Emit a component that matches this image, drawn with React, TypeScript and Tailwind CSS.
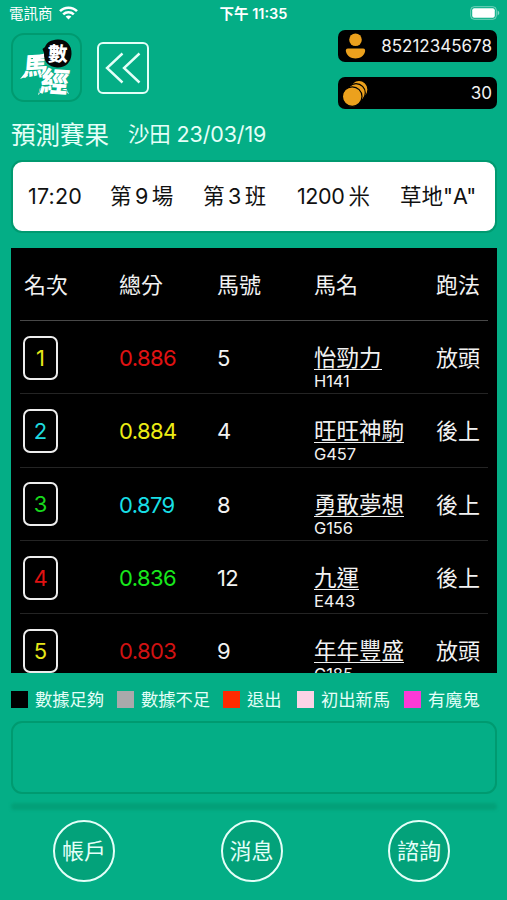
import React from "react";

type Runner = {
  rank: number;
  rankColor: string;
  score: string;
  scoreColor: string;
  no: number;
  name: string;
  code: string;
  style: string;
};

const runners: Runner[] = [
  { rank: 1, rankColor: "text-[#e6e619]", score: "0.886", scoreColor: "text-[#e01212]", no: 5, name: "怡勁力", code: "H141", style: "放頭" },
  { rank: 2, rankColor: "text-[#1fd9de]", score: "0.884", scoreColor: "text-[#ecec14]", no: 4, name: "旺旺神駒", code: "G457", style: "後上" },
  { rank: 3, rankColor: "text-[#18d81c]", score: "0.879", scoreColor: "text-[#18dfe6]", no: 8, name: "勇敢夢想", code: "G156", style: "後上" },
  { rank: 4, rankColor: "text-[#e01212]", score: "0.836", scoreColor: "text-[#18e81c]", no: 12, name: "九運", code: "E443", style: "後上" },
  { rank: 5, rankColor: "text-[#e6e619]", score: "0.803", scoreColor: "text-[#d01212]", no: 9, name: "年年豐盛", code: "G185", style: "放頭" },
];

const legends = [
  { color: "bg-black", label: "數據足夠", width: "w-[106px]" },
  { color: "bg-[#a9a9ab]", label: "數據不足", width: "w-[106px]" },
  { color: "bg-[#ff2a00]", label: "退出", width: "w-[74px]" },
  { color: "bg-[#fbd3e6]", label: "初出新馬", width: "w-[107px]" },
  { color: "bg-[#fb3ad6]", label: "有魔鬼", width: "w-[80px]" },
];

const StatusBar = () => (
  <div className="relative flex h-[28px] shrink-0 items-center justify-between pl-[9px] pr-[7px] text-white">
    <div className="flex items-center gap-[6px]">
      <span className="text-[14.5px] leading-none">電訊商</span>
      <svg width="19" height="14" viewBox="0 0 19 14" fill="none" stroke="white" strokeWidth="2.6" className="-mt-[2px]">
        <path d="M1 5.2C5.6 0.6 13.4 0.6 18 5.2" />
        <path d="M4.2 8.4C7.1 5.6 11.9 5.6 14.8 8.4" />
        <path d="M9.5 13.5L6.6 10.5C8.2 9.1 10.8 9.1 12.4 10.5Z" fill="white" stroke="none" />
      </svg>
    </div>
    <span className="absolute left-0 w-full text-center text-[14.5px] font-semibold leading-none">
      下午 11:35
    </span>
    <svg width="30" height="14" viewBox="0 0 30 14" className="-mt-[2px]">
      <rect x="0.7" y="0.7" width="25.6" height="12.6" rx="3.5" fill="none" stroke="white" strokeOpacity="0.45" />
      <rect x="2.2" y="2.2" width="22.6" height="9.6" rx="2" fill="white" />
      <path d="M27.6 4.6C29.8 5.4 29.8 8.6 27.6 9.4Z" fill="white" fillOpacity="0.5" />
    </svg>
  </div>
);

const Logo = () => (
  <div className="h-[69px] w-[71px] rounded-[13px] border-2 border-[#009a70]">
    <svg width="67" height="65" viewBox="0 0 67 65" className="font-black">
      <g fill="white">
        <text fontSize="25" transform="translate(9 41) rotate(-3) skewX(-8)">馬</text>
        {/* brush tails */}
        <path d="M13 37L7 44L15 41Z" />
        <path d="M20 22L33 18L34 22L20 26Z" />
        <path d="M27 53L25 60L32 55Z" />
        <path d="M49 55L56 59L53 53Z" />
        <text fontSize="28" stroke="#04ae86" strokeWidth="1.6" paintOrder="stroke" transform="translate(26 56) rotate(4) skewX(-6)">經</text>
      </g>
      <path
        d="M44.5 4.500C53 4 59 10 58.500 19C58 28 52 33 44 32.500C36 32 30.500 27 31 18L29.500 14L32 12C34 7 38 5 44.500 4.500Z"
        fill="#060606"
      />
      <text x="35" y="26" fontSize="19.5" fill="white">數</text>
    </svg>
  </div>
);

const Header = () => (
  <div className="flex h-[81px] shrink-0 pl-[11px] pr-[10px]">
    <div className="pt-[5px]">
      <Logo />
    </div>
    <div className="ml-[15px] mt-[14px] flex h-[52px] w-[52px] items-center justify-center rounded-[6px] border-2 border-[#e4fff8]">
      <svg width="36" height="32" viewBox="0 0 36 32" fill="none" stroke="#e4fff8" strokeWidth="2.4">
        <path d="M17.500 1.500L2 16L17.500 30.500" />
        <path d="M34.500 1.500L19 16L34.500 30.500" />
      </svg>
    </div>
    <div className="ml-auto flex flex-col gap-[15px] pt-[2px]">
      <div className="flex h-[32px] w-[159px] items-center justify-between rounded-[7px] bg-black pl-[7px] pr-[5px]">
        <svg width="21" height="26" viewBox="0 0 21 26" fill="#eca11d">
          <circle cx="10.500" cy="6.700" r="6.300" />
          <path d="M3 15.600H18C20 15.600 20.500 17 20 18.800C19 23 15 25.500 10.500 25.500C6 25.500 2 23 1 18.800C0.500 17 1 15.600 3 15.600Z" />
        </svg>
        <span className="text-[17px] leading-none text-[#f2f2f2]">85212345678</span>
      </div>
      <div className="flex h-[32px] w-[159px] items-center justify-between rounded-[7px] bg-black pl-[4px] pr-[5px]">
        <svg width="27" height="27" viewBox="0 0 27 27" fill="#eca11d" stroke="black" strokeWidth="1.200">
          <circle cx="17" cy="9.500" r="9" />
          <circle cx="14" cy="13" r="9.300" />
          <circle cx="10.200" cy="16.600" r="9.800" />
        </svg>
        <span className="text-[17px] leading-none text-[#f2f2f2]">30</span>
      </div>
    </div>
  </div>
);

const RaceInfo = () => (
  <div className="ml-[11px] mr-[10px] flex h-[73px] shrink-0 items-center rounded-[11px] border-2 border-[#009a70] bg-white pl-[15px] pt-[1px] text-[21.5px] leading-none text-[#111] whitespace-nowrap">
    <span className="w-[82px] tracking-[0.2px]">17:20</span>
    <span className="w-[93px]">第<span className="mx-[3.500px]">9</span>場</span>
    <span className="w-[94px]">第<span className="mx-[3.500px]">3</span>班</span>
    <span className="w-[103px] tracking-[-0.4px]">1200<span className="ml-[4px]">米</span></span>
    <span>草地"A"</span>
  </div>
);

const ResultTable = () => (
  <div className="ml-[11px] mr-[10px] mt-[15px] h-[425px] shrink-0 overflow-hidden bg-black px-[9px] text-[22px] leading-none text-[#f2f2f2]">
    <div className="grid h-[73px] grid-cols-[95px_98px_97px_122px_1fr] items-center border-b border-[#484848] pl-[4px] pt-[1px] whitespace-nowrap">
      <span>名次</span>
      <span>總分</span>
      <span>馬號</span>
      <span>馬名</span>
      <span>跑法</span>
    </div>
    {runners.map((runner) => (
      <div
        key={runner.rank}
        className="grid h-[73.3px] grid-cols-[95px_98px_97px_122px_1fr] items-center border-b border-[#242424] pl-[4px] pt-[1px] whitespace-nowrap"
      >
        <div className={`-ml-[1px] flex h-[44px] w-[35px] items-center justify-center rounded-[7px] border-2 border-[#ededed] ${runner.rankColor}`}>
          {runner.rank}
        </div>
        <span className={`pt-[1px] tracking-[-0.600px] ${runner.scoreColor}`}>{runner.score}</span>
        <span className="pt-[1px] tracking-[-0.600px]">{runner.no}</span>
        <div className="pt-[23px]">
          <p className="h-[23px] w-fit border-b-[1.500px] border-[#f2f2f2] text-[22.5px] leading-[22px]">{runner.name}</p>
          <p className="mt-[1px] text-[16.5px] leading-[20px] tracking-[-0.1px]">{runner.code}</p>
        </div>
        <span className="pt-[1px]">{runner.style}</span>
      </div>
    ))}
  </div>
);

const Legend = () => (
  <div className="flex h-[48px] shrink-0 pl-[11px] pt-[18px]">
    {legends.map((item) => (
      <div key={item.label} className={`flex h-[17px] items-center gap-[7px] whitespace-nowrap ${item.width}`}>
        <span className={`h-[17px] w-[17px] shrink-0 ${item.color}`} />
        <span className="text-[17.3px] leading-none text-[#e4fff8]">{item.label}</span>
      </div>
    ))}
  </div>
);

const BottomNav = () => (
  <nav className="flex justify-between pl-[53px] pr-[57px] pt-[10px]">
    {["帳戶", "消息", "諮詢"].map((label) => (
      <button
        key={label}
        className="flex h-[62px] w-[62px] items-center justify-center rounded-full border-2 border-[#e4fff8] bg-[#03a27a] text-[22px] leading-none text-[#e4fff8] whitespace-nowrap"
      >
        {label}
      </button>
    ))}
  </nav>
);

const App = () => {
  return (
    <main className="flex h-[900px] w-[507px] flex-col overflow-hidden bg-[#04ae86] font-['Inter','Noto_Sans_CJK_TC',sans-serif]">
      <StatusBar />
      <Header />
      <div className="flex h-[51px] shrink-0 items-center gap-[19px] pl-[11px] pt-[1px] text-[#e4fff8] whitespace-nowrap">
        <h1 className="text-[24.5px] leading-none">預測賽果</h1>
        <span className="text-[21.5px] leading-none tracking-[-0.15px]">沙田 23/03/19</span>
      </div>
      <RaceInfo />
      <ResultTable />
      <Legend />
      <div className="ml-[11px] mr-[10px] h-[73px] shrink-0 rounded-[11px] border-2 border-[#009a70]" />
      <div className="ml-[11px] mr-[10px] mt-[9px] h-[7px] shrink-0 rounded-full bg-[#02a078] blur-[1.500px]" />
      <BottomNav />
    </main>
  );
};

export default App;
